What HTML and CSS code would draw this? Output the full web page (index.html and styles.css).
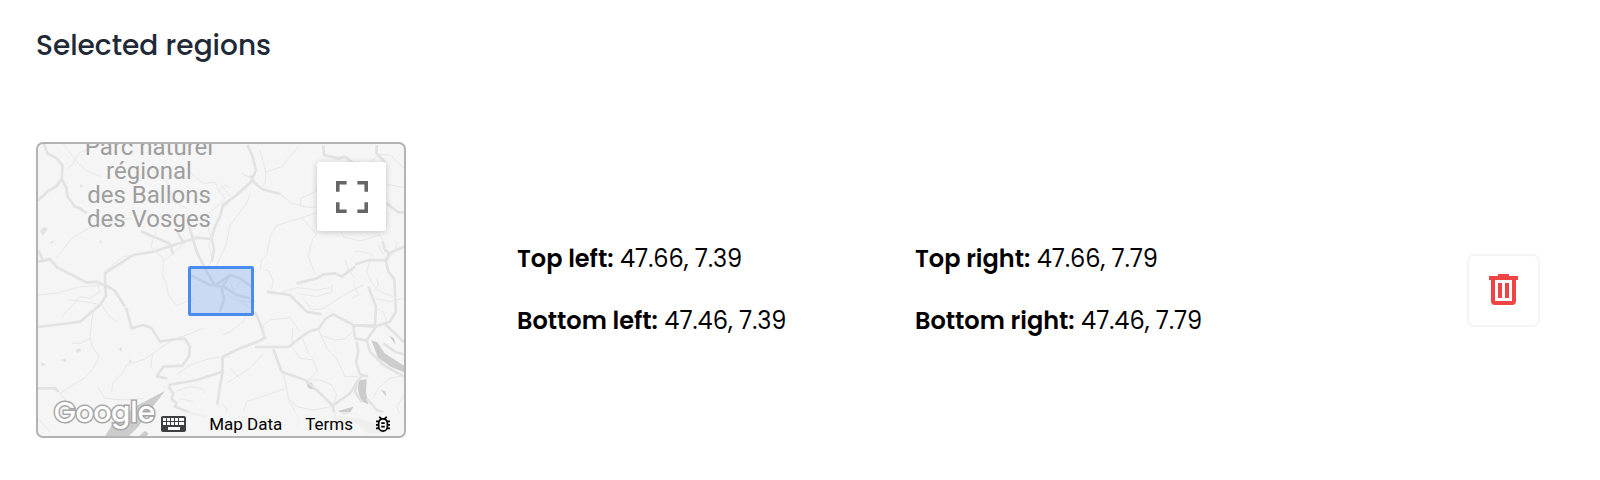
FILE: index.html
```html
<!DOCTYPE html>
<html lang="en">
<head>
    <meta charset="UTF-8">
    <meta name="viewport" content="width=device-width, initial-scale=1.0">
    <title>Selected regions</title>
    <link rel="stylesheet" href="styles.css">
</head>
<body>
    <main class="regions">
        <h1 class="regions-title">Selected regions</h1>

        <div class="region">
            <div class="map">
                <svg class="map-canvas" viewBox="24 27 1098 876" preserveAspectRatio="xMidYMid slice" aria-hidden="true">
                    <!-- lakes and built-up areas -->
                    <g class="map-area">
                        <path d="M405 768L365 820L325 875L295 905H225L245 870L320 812Z"/>
                        <path d="M325 905L345 888L355 895L350 905Z"/>
                        <path d="M1024 616L1042 622L1064 655L1096 676L1122 692V712L1082 695L1044 668Z"/>
                        <path d="M986 735L1010 733L1008 770L1014 808L992 797L984 765Z"/>
                        <path d="M925 827L970 815L960 835L940 840Z"/>
                        <path d="M1078 602L1092 610L1097 630Z"/>
                        <path d="M1052 763L1066 770L1069 785Z"/>
                        <path d="M828 740L845 743L857 764L836 760Z"/>
                    </g>
                    <g class="map-area map-area-light">
                        <path d="M30 288L42 276L54 281L38 302Z"/>
                        <path d="M60 322L75 316L64 328Z"/>
                        <path d="M32 682L48 688L35 694Z"/>
                        <path d="M92 676L108 670V682Z"/>
                        <path d="M136 646L150 640L154 648L142 654Z"/>
                        <path d="M148 150L158 148L154 160Z"/>
                        <path d="M208 314L216 320L210 326Z"/>
                        <path d="M266 645L274 634L276 650Z"/>
                        <path d="M296 672L308 680L298 684Z"/>
                        <path d="M920 845L990 850L1015 858L1070 880L1060 895H1010L985 870L925 865Z"/>
                    </g>

                    <!-- main roads -->
                    <g class="road road-main">
                        <path d="M42 27L52 55L80 70L98 92L95 132L78 155L55 168L24 196"/>
                        <path d="M95 132L108 156L113 185L135 215L150 220L170 235"/>
                        <path d="M24 345L40 378L60 372L82 398L130 422L170 443L200 440L245 462"/>
                        <path d="M24 380L60 372"/>
                        <path d="M225 448V414L260 392L310 360L370 350L430 330L500 308L540 312"/>
                        <path d="M332 288L370 305L418 325L430 358"/>
                        <path d="M440 285L450 306L462 322M478 275L500 350L530 410L555 452"/>
                        <path d="M600 195L578 215L570 245L555 275L545 310L552 345L545 380"/>
                        <path d="M225 445L228 482L210 510L150 560L120 564L24 576"/>
                        <path d="M228 450L255 468L285 515M288 518L305 580L340 570L365 580L390 620L440 612L465 612L480 636L477 664L457 692L400 695L380 724L412 730"/>
                        <path d="M24 760L75 760L86 770"/>
                        <path d="M415 750L500 735L577 710L578 665L630 640L690 617L705 608L688 560L675 530"/>
                        <path d="M675 636L775 636L815 605L840 588L865 582L888 550L910 538L970 570L1034 575"/>
                        <path d="M730 642L755 710L825 735L860 765L908 812L960 775L985 735L998 720"/>
                        <path d="M908 812L916 850L942 880"/>
                        <path d="M415 755L430 775L425 792L440 805L435 815L485 835L530 846"/>
                        <path d="M578 710L568 765L562 810"/>
                        <path d="M652 30L668 65L678 105L663 140L620 180L576 212"/>
                        <path d="M660 122L675 145L696 162L750 177"/>
                        <path d="M880 32L882 60L925 70L945 65L970 85"/>
                        <path d="M1040 30V55L1065 82"/>
                        <path d="M1070 205L1105 232H1122"/>
                        <path d="M800 445L860 430L880 418L915 415L935 425L975 395"/>
                        <path d="M975 388L1020 375L1068 376L1078 355L1122 335"/>
                        <path d="M1058 320L1065 345L1078 355L1068 378L1075 410L1093 433L1096 500L1098 530L1080 560L1040 572L1010 615L1020 650L1060 690L1122 725"/>
                        <path d="M1015 455L1038 515L1035 570L970 572L975 610L1015 618"/>
                        <path d="M1065 568L1090 590L1122 622M1060 625L1095 650L1122 658"/>
                        <path d="M980 620L985 650L978 680L990 718L1015 725"/>
                        <path d="M710 470L745 475L780 480L830 530L875 538"/>
                        <path d="M1010 790L1040 825L1060 832"/>
                        <path d="M985 735L975 770L995 800"/>
                    </g>

                    <!-- motorways around the selected region -->
                    <g class="road road-main">
                        <path d="M480 420L540 450L580 455L620 480L660 490"/>
                        <path d="M600 420L575 460L582 492L570 530"/>
                        <path d="M555 452L600 420L630 430L665 455"/>
                    </g>

                    <!-- side roads -->
                    <g class="road">
                        <path d="M100 27L145 85L170 108L215 125M108 105L128 88L145 55L180 40"/>
                        <path d="M360 100L410 140L430 200L470 220M470 100L495 125L520 145L555 142L565 165L585 150L600 160"/>
                        <path d="M565 165L585 190L560 215L530 240L535 280L550 330"/>
                        <path d="M80 370L125 310L175 280L240 262L300 250"/>
                        <path d="M380 285L362 335L400 370L398 420L410 450"/>
                        <path d="M400 380L440 345L480 310M310 360L280 365L225 410"/>
                        <path d="M200 440L210 470L180 490L150 485L110 530L96 545"/>
                        <path d="M24 480L80 475L150 455L225 450"/>
                        <path d="M115 495L165 500L215 510L235 540L260 560"/>
                        <path d="M185 555L180 612L190 640L208 664L190 700L165 728L110 762L90 775L145 840"/>
                        <path d="M185 555L195 515M125 625L150 625L185 608"/>
                        <path d="M245 770L248 745L280 710L290 690L345 672L390 640M390 640L430 615L520 580"/>
                        <path d="M368 658L362 700M410 450L415 480L440 512L490 490"/>
                        <path d="M440 720L480 690L540 670L600 665"/>
                        <path d="M437 770L475 755L515 760L525 775M445 790L490 800"/>
                        <path d="M205 760L225 790L280 795L340 790"/>
                        <path d="M550 300L535 330L548 370L530 405"/>
                        <path d="M690 45L700 80L708 112L705 142L695 160M705 112L755 95L780 65L805 35"/>
                        <path d="M635 115L665 130M570 145L585 165L610 195"/>
                        <path d="M750 177L785 205L835 217L860 217M812 215L812 190L855 170L870 125L890 118"/>
                        <path d="M815 248L870 230L895 218M815 248L860 298L848 310L835 365L855 418"/>
                        <path d="M815 248L775 260L740 272L722 300L710 360L695 375L690 403"/>
                        <path d="M660 175L650 205L600 270L588 330L560 390"/>
                        <path d="M1040 58L1080 60L1122 100M1122 158L1070 148M1022 82L1045 60"/>
                        <path d="M935 292L940 305L990 318L1015 310L1050 300L1060 320"/>
                        <path d="M975 350L1000 350L1035 365M1045 330L1060 360M1100 320L1095 350L1080 365"/>
                        <path d="M945 375L958 410L975 430M1020 380L1010 410L1025 445L1050 470L1090 485"/>
                        <path d="M705 405L715 405L730 440L725 462M745 475L800 458L860 465L900 458"/>
                        <path d="M800 475L860 485L905 470L905 450M820 490L845 525L880 520L920 495L960 470L1000 450"/>
                        <path d="M650 530L640 560L600 590L575 600M705 610L700 570L720 555L780 548L810 590"/>
                        <path d="M788 580L785 635L810 670L850 675L862 710L835 735"/>
                        <path d="M815 605L835 655L850 670M865 582L890 640L920 670L945 725L985 725"/>
                        <path d="M870 600L915 615L945 612L975 580"/>
                        <path d="M700 655L660 700L620 725L590 745M600 700L630 730"/>
                        <path d="M760 715L770 760L775 790L800 815L850 825L905 815"/>
                        <path d="M770 760L710 780L650 800L640 830M577 805L590 820L585 845"/>
                        <path d="M825 735L870 735L905 750L920 780L910 810"/>
                        <path d="M1122 722L1080 730L1045 760L1030 790M1122 780L1100 815L1115 850"/>
                        <path d="M1040 490L1080 500L1110 492M1030 470L1045 450L1040 430"/>
                        <path d="M1098 495L1122 490M1070 560L1060 530L1040 520M970 445L985 480L965 490"/>
                        <path d="M775 790L805 850L800 880M24 850L60 890"/>
                        <path d="M590 480L630 500L680 500M600 440L620 490L660 520M640 430L620 455"/>
                    </g>
                </svg>

                <div class="map-label">Parc naturel<br>régional<br>des Ballons<br>des Vosges</div>

                <div class="map-selection"></div>

                <button type="button" class="map-fullscreen" aria-label="Toggle fullscreen view">
                    <svg viewBox="0 0 18 18" width="32" height="32">
                        <path d="M0 0v6h2V2h4V0H0zm16 0h-4v2h4v4h2V0h-2zm0 16h-4v2h6v-6h-2v4zM2 12H0v6h6v-2H2v-4z"/>
                    </svg>
                </button>

                <div class="map-logo">Google</div>

                <div class="map-footer">
                    <button type="button" class="map-link" aria-label="Keyboard shortcuts">
                        <svg viewBox="0 0 25 16" width="25" height="16">
                            <rect width="25" height="16" rx="2" fill="#3c4043"/>
                            <path d="M2 2h3v3H2zM6 2h3v3H6zM10 2h3v3h-3zM14 2h3v3h-3zM18 2h5v3h-5zM2 6h3v3H2zM6 6h3v3H6zM10 6h3v3h-3zM14 6h3v3h-3zM18 6h5v3h-5zM7 11h12v3H7z" fill="#fff"/>
                        </svg>
                    </button>
                    <button type="button" class="map-link">Map Data</button>
                    <a class="map-link" href="#">Terms</a>
                    <a class="map-link" href="#" aria-label="Report a map error">
                        <svg viewBox="4 3 16 18" width="14" height="16">
                            <path d="M20 8h-2.800a6 6 0 0 0-1.800-2L17 4.400 15.600 3l-2.200 2.200a6 6 0 0 0-2.800 0L8.400 3 7 4.400 8.600 6a6 6 0 0 0-1.800 2H4v2h2.100l-.1 1v1H4v2h2v1l.1 1H4v2h2.800a6 6 0 0 0 10.400 0H20v-2h-2.100l.1-1v-1h2v-2h-2v-1l-.1-1H20V8zm-4 7a4 4 0 0 1-8 0v-4a4 4 0 0 1 8 0v4zm-6-1h4v2h-4v-2zm0-4h4v2h-4v-2z"/>
                        </svg>
                    </a>
                </div>
            </div>

            <div class="coords">
                <p class="coord"><strong>Top left:</strong> 47.66, 7.39</p>
                <p class="coord"><strong>Top right:</strong> 47.66, 7.79</p>
                <p class="coord"><strong>Bottom left:</strong> 47.46, 7.39</p>
                <p class="coord"><strong>Bottom right:</strong> 47.46, 7.79</p>
            </div>

            <button type="button" class="delete-button" aria-label="Delete region">
                <svg viewBox="0 0 29 32" width="29" height="32">
                    <path d="M9 0h11v2h9v4h-2v21a4 4 0 0 1-4 4H6a4 4 0 0 1-4-4V6H0V2h9zM6 6v21h17V6zM9 9h4v15H9zM16 9h4v15h-4z" fill-rule="evenodd"/>
                </svg>
            </button>
        </div>
    </main>
</body>
</html>
```

FILE: styles.css
```css
:root {
    --text: #000000;
    --heading: #1f2937;
    --danger: #ef4444;
    --map-land: #f5f5f5;
    --map-road: #e2e2e2;
    --map-road-minor: #e7e7e7;
    --map-blue: #4a8cee;
}

* {
    box-sizing: border-box;
}

body {
    margin: 0;
    background-color: #ffffff;
    color: var(--text);
    font-family: Poppins, Inter, sans-serif;
    -webkit-font-smoothing: antialiased;
}

button {
    padding: 0;
    border: none;
    background: none;
    font: inherit;
    color: inherit;
    cursor: pointer;
}

.regions {
    padding: 25px 60px 40px 36px;
}

.regions-title {
    margin: 0 0 75px;
    font-size: 28px;
    font-weight: 500;
    line-height: 42px;
    color: var(--heading);
}

.region {
    display: grid;
    grid-template-columns: 370px 1fr auto;
    column-gap: 111px;
    align-items: center;
}

/* Map preview */
.map {
    position: relative;
    height: 296px;
    border: 2px solid #b3b3b3;
    border-radius: 7px;
    background-color: var(--map-land);
    overflow: hidden;
    font-family: Roboto, sans-serif;
}

.map-canvas {
    display: block;
    width: 100%;
    height: 100%;
}

.road {
    fill: none;
    stroke: var(--map-road-minor);
    stroke-width: 3;
    stroke-linejoin: round;
}

.road-main {
    stroke: var(--map-road);
    stroke-width: 8;
}

.map-area {
    fill: #cccccc;
}

.map-area-light {
    fill: #e2e2e2;
}

.map-label {
    position: absolute;
    top: -9px;
    left: 46px;
    width: 130px;
    font-size: 24px;
    line-height: 24px;
    text-align: center;
    white-space: nowrap;
    color: #9e9e9e;
}

.map-selection {
    position: absolute;
    top: 122px;
    left: 150px;
    width: 66px;
    height: 50px;
    border: 3px solid var(--map-blue);
    border-radius: 2px;
    background-color: rgba(74, 140, 238, 0.25);
}

.map-fullscreen {
    position: absolute;
    top: 18px;
    right: 18px;
    display: flex;
    align-items: center;
    justify-content: center;
    width: 69px;
    height: 69px;
    border-radius: 3px;
    background-color: #ffffff;
    box-shadow: 0 1px 6px rgba(0, 0, 0, 0.2);
    fill: #666666;
}

.map-logo {
    position: absolute;
    left: 16px;
    bottom: 3px;
    font-family: Poppins, sans-serif;
    font-size: 28px;
    font-weight: 500;
    line-height: 40px;
    color: #ffffff;
    -webkit-text-stroke: 3px #a6a6a6;
    paint-order: stroke fill;
}

.map-footer {
    position: absolute;
    right: 0;
    bottom: 0;
    display: flex;
    align-items: center;
    gap: 23px;
    height: 24px;
    padding-right: 14px;
    background-color: rgba(245, 245, 245, 0.7);
    font-size: 17px;
    line-height: 24px;
}

.map-link {
    display: flex;
    align-items: center;
    color: #000000;
    text-decoration: none;
    white-space: nowrap;
}

/* Corner coordinates */
.coords {
    display: grid;
    grid-template-columns: 1fr 1fr;
    row-gap: 26px;
    max-width: 796px;
}

.coord {
    margin: 0;
    font-size: 24px;
    line-height: 36px;
}

.coord strong {
    font-weight: 600;
}

.delete-button {
    display: flex;
    align-items: center;
    justify-content: center;
    width: 73px;
    height: 73px;
    border: 2px solid #f5f5f5;
    border-radius: 7px;
    fill: var(--danger);
}
```
